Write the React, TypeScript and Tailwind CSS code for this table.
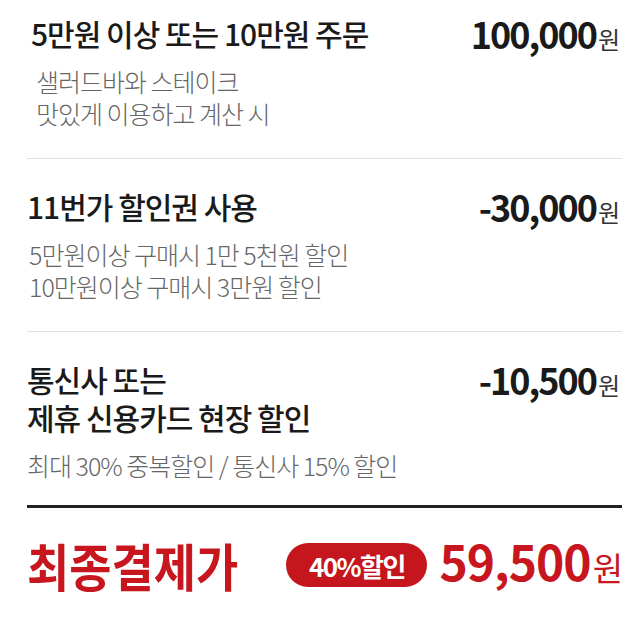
import { FC, ReactNode } from "react";

const Amount: FC<{ value: string }> = ({ value }) => (
  <div className="shrink-0 h-[38px] mr-[2px] text-[#1a1a1a] leading-[38px] whitespace-nowrap">
    <span className="text-[36px] font-bold tracking-[-2px]">{value}</span>
    <span className="text-[24px] font-normal text-[#333] ml-[2px]">원</span>
  </div>
);

const Row: FC<{
  title: ReactNode;
  amount: string;
  lines: string[];
  className?: string;
  titleIndent?: string;
  subIndent?: string;
}> = ({ title, amount, lines, className = "", titleIndent = "", subIndent = "" }) => (
  <div className={className}>
    <div className="flex justify-between items-start">
      <h3 className={`text-[30px] leading-[38px] font-medium tracking-[-1px] text-[#1a1a1a] ${titleIndent}`}>
        {title}
      </h3>
      <Amount value={amount} />
    </div>
    <div className={`mt-[13px] text-[25px] leading-[32px] font-light tracking-[-1px] text-[#666] ${subIndent}`}>
      {lines.map((l) => (
        <p key={l}>{l}</p>
      ))}
    </div>
  </div>
);

export default function App() {
  return (
    <div className="w-[641px] h-[617px] overflow-hidden bg-white pl-[27px] pr-[19px] font-['Noto_Sans_CJK_KR','Noto_Sans',sans-serif]">
      {/* 주문 금액 */}
      <Row
        className="pt-[14px] pb-[29px] border-b border-[#e0e0e0]"
        titleIndent="pl-[4px]"
        subIndent="pl-[9px]"
        title="5만원 이상 또는 10만원 주문"
        amount="100,000"
        lines={["샐러드바와 스테이크", "맛있게 이용하고 계산 시"]}
      />

      {/* 할인권 */}
      <Row
        className="pt-[28px] pb-[29px] border-b border-[#e0e0e0]"
        subIndent="pl-[2px]"
        title="11번가 할인권 사용"
        amount="-30,000"
        lines={["5만원이상 구매시 1만 5천원 할인", "10만원이상 구매시 3만원 할인"]}
      />

      {/* 카드 할인 */}
      <Row
        className="pt-[28px] pb-[24px] border-b-[3px] border-[#222]"
        title={
          <>
            통신사 또는
            <br />
            제휴 신용카드 현장 할인
          </>
        }
        amount="-10,500"
        lines={["최대 30% 중복할인 / 통신사 15% 할인"]}
      />

      {/* 최종결제가 */}
      <div className="mt-[35px] h-[44px] flex items-center justify-between text-[#c8161e]">
        <h2 className="text-[51px] leading-[56px] font-bold origin-left scale-x-[0.9] whitespace-nowrap">
          최종결제가
        </h2>
        <div className="flex items-center gap-[12px]">
          <span className="h-[44px] w-[141px] rounded-full bg-[#c4161c] text-white flex items-center justify-center text-[26px] font-bold tracking-[-1.5px]">
            40%할인
          </span>
          <div className="h-[44px] mb-[10px] mr-[-1px] leading-[44px] whitespace-nowrap">
            <span className="text-[48px] font-bold tracking-[-1px]">59,500</span>
            <span className="text-[33px] font-normal ml-[2px]">원</span>
          </div>
        </div>
      </div>
    </div>
  );
}
